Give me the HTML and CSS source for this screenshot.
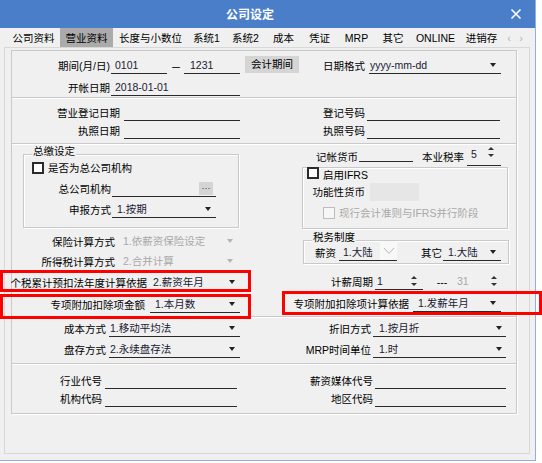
FILE: index.html
```html
<!DOCTYPE html>
<html lang="zh-CN">
<head>
<meta charset="utf-8">
<title>公司设定</title>
<link rel="stylesheet" href="styles.css">
</head>
<body>
<div class="win">
  <div class="titlebar">
    <span class="title">公司设定</span>
    <span class="close"><svg width="12" height="12" viewBox="0 0 12 12"><path d="M1.5 1.5 L10.5 10.5 M10.5 1.5 L1.5 10.5" stroke="#fff" stroke-width="1.6" fill="none"/></svg></span>
  </div>
  <div class="tabs">
    <span class="tab">公司资料</span>
    <span class="tab active">营业资料</span>
    <span class="tab">长度与小数位</span>
    <span class="tab">系统1</span>
    <span class="tab">系统2</span>
    <span class="tab">成本</span>
    <span class="tab">凭证</span>
    <span class="tab">MRP</span>
    <span class="tab">其它</span>
    <span class="tab">ONLINE</span>
    <span class="tab">进销存</span>
    <span class="tabnav">&lsaquo;</span>
    <span class="tabnav">&rsaquo;</span>
  </div>
  <div class="page">
    <div class="form">
      <div class="sec s1">
        <div class="row">
          <span class="lab w-s1">期间(月/日)</span>
          <span class="fld f-p1"><span class="val">0101</span></span>
          <span class="dash">---</span>
          <span class="fld f-p2"><span class="val">1231</span></span>
          <span class="btn">会计期间</span>
          <span class="lab w-df">日期格式</span>
          <span class="fld f-df"><span class="val">yyyy-mm-dd</span><i class="arr"></i></span>
        </div>
        <div class="row r2">
          <span class="lab w-s1">开帐日期</span>
          <span class="fld f-kz"><span class="val">2018-01-01</span></span>
        </div>
      </div>
      <div class="sec s2">
        <div class="row">
          <span class="lab w-s2">营业登记日期</span>
          <span class="fld f-s2a"></span>
          <span class="lab w-s2b">登记号码</span>
          <span class="fld f-s2b"></span>
        </div>
        <div class="row r2">
          <span class="lab w-s2">执照日期</span>
          <span class="fld f-s2a"></span>
          <span class="lab w-s2b">执照号码</span>
          <span class="fld f-s2b"></span>
        </div>
      </div>
      <div class="sec s3">
        <div class="col col-l">
          <div class="group g-zj">
            <span class="legend">总缴设定</span>
            <div class="chkrow c-zj"><span class="chk"></span><span class="chklab">是否为总公司机构</span></div>
            <div class="row r-zgs">
              <span class="lab w-zgs">总公司机构</span>
              <span class="fld f-zgs"><span class="val"></span><span class="dots">···</span></span>
            </div>
            <div class="row r-sb">
              <span class="lab w-zgs">申报方式</span>
              <span class="fld f-zgs f-sb"><span class="val">1.按期</span><i class="arr"></i></span>
            </div>
          </div>
          <div class="row r-bx">
            <span class="lab w-bx">保险计算方式</span>
            <span class="fld f-dis"><span class="val">1.依薪资保险设定</span><i class="arr grey"></i></span>
          </div>
          <div class="row r-sd">
            <span class="lab w-bx">所得税计算方式</span>
            <span class="fld f-dis"><span class="val">2.合并计算</span><i class="arr grey"></i></span>
          </div>
          <div class="row r-gs">
            <span class="lab w-gs">个税累计预扣法年度计算依据</span>
            <span class="fld f-gs"><span class="val">2.薪资年月</span><i class="arr"></i></span>
          </div>
          <div class="row r-zx">
            <span class="lab w-zx">专项附加扣除项金额</span>
            <span class="fld f-zx"><span class="val">1.本月数</span><i class="arr"></i></span>
          </div>
        </div>
        <div class="col col-r">
          <div class="row r-jz">
            <span class="lab w-jz">记帐货币</span>
            <span class="fld f-jz"></span>
            <span class="lab w-sl">本业税率</span>
            <span class="fld f-sl"><span class="val">5</span><span class="spin"><i class="up"></i><i class="dn"></i></span></span>
          </div>
          <div class="group g-ifrs">
            <div class="chkrow c-ifrs"><span class="chk"></span><span class="chklab">启用IFRS</span></div>
            <div class="row r-gn">
              <span class="lab w-gn">功能性货币</span>
              <span class="greybox"></span>
            </div>
            <div class="chkrow c-xh"><span class="chk dis"></span><span class="chklab disabled">现行会计准则与IFRS并行阶段</span></div>
          </div>
          <div class="group g-sw">
            <span class="legend">税务制度</span>
            <div class="row r-sw">
              <span class="lab w-xz">薪资</span>
              <span class="fld f-xz"><span class="val">1.大陆</span><span class="chev"><svg width="12" height="8" viewBox="0 0 12 8"><path d="M1 1 L6 6.5 L11 1" stroke="#b8b8b8" stroke-width="1" fill="none"/></svg></span></span>
              <span class="lab w-qt">其它</span>
              <span class="fld f-qt"><span class="val">1.大陆</span><i class="arr"></i></span>
            </div>
          </div>
          <div class="row r-jx">
            <span class="lab w-jx">计薪周期</span>
            <span class="fld f-jx1"><span class="val">1</span><span class="spin"><i class="up"></i><i class="dn"></i></span></span>
            <span class="dash d-jx">---</span>
            <span class="fld f-jx2"><span class="val disabled">31</span><span class="spin"><i class="up"></i><i class="dn"></i></span></span>
          </div>
          <div class="row r-zxjs">
            <span class="lab w-zxjs">专项附加扣除项计算依据</span>
            <span class="fld f-zxjs"><span class="val">1.发薪年月</span><i class="arr"></i></span>
          </div>
        </div>
      </div>
      <div class="sec s4">
        <div class="row">
          <span class="lab w-s4">成本方式</span>
          <span class="fld f-s4a"><span class="val">1.移动平均法</span><i class="arr"></i></span>
          <span class="lab w-s4b">折旧方式</span>
          <span class="fld f-s4b"><span class="val">1.按月折</span><i class="arr"></i></span>
        </div>
        <div class="row r2">
          <span class="lab w-s4">盘存方式</span>
          <span class="fld f-s4a"><span class="val">2.永续盘存法</span><i class="arr"></i></span>
          <span class="lab w-s4b">MRP时间单位</span>
          <span class="fld f-s4b"><span class="val">1.时</span><i class="arr"></i></span>
        </div>
      </div>
      <div class="sec s5">
        <div class="row">
          <span class="lab w-s5">行业代号</span>
          <span class="fld f-s5a"></span>
          <span class="lab w-s5b">薪资媒体代号</span>
          <span class="fld f-s5b"></span>
        </div>
        <div class="row r2">
          <span class="lab w-s5">机构代码</span>
          <span class="fld f-s5a"></span>
          <span class="lab w-s5b">地区代码</span>
          <span class="fld f-s5b"></span>
        </div>
      </div>
    </div>
  </div>
  <div class="mark m1"></div>
  <div class="mark m2"></div>
  <div class="mark m3"></div>
</div>
</body>
</html>
```
FILE: styles.css
```css
* { box-sizing: border-box; }
body {
  margin: 0;
  background: #fff;
  font-family: "Liberation Sans", "Noto Sans CJK SC", sans-serif;
  font-size: 10.5px;
  color: #000;
}
.win {
  position: relative;
  width: 536px;
  height: 461px;
  background: #f0f0f0;
  border-right: 1px solid #8db0e0;
  border-bottom: 1px solid #8db0e0;
}
.titlebar {
  height: 28px;
  background: #4a7ec9;
  display: flex;
  align-items: center;
}
.title {
  flex: 1;
  text-align: center;
  color: #fff;
  font-weight: bold;
  font-size: 12px;
  font-family: "Noto Sans CJK SC", sans-serif;
  line-height: 16px;
}
.close {
  width: 32px;
  margin-right: 3px;
  display: flex;
  justify-content: center;
  align-items: center;
}
.tabs {
  height: 19px;
  display: flex;
  padding-left: 7px;
}
.tab {
  display: flex;
  align-items: center;
  justify-content: center;
  white-space: nowrap;
  line-height: 14px;
}
.tab:nth-child(1) { width: 53px; }
.tab:nth-child(2) { width: 53px; }
.tab:nth-child(3) { width: 75px; }
.tab:nth-child(4) { width: 37px; }
.tab:nth-child(5) { width: 41px; }
.tab:nth-child(6) { width: 35px; }
.tab:nth-child(7) { width: 37px; }
.tab:nth-child(8) { width: 37px; }
.tab:nth-child(9) { width: 36px; }
.tab:nth-child(10) { width: 49px; }
.tab:nth-child(11) { width: 43px; }
.tab.active { background: #ababab; }
.tabnav {
  width: 12px;
  display: flex;
  align-items: center;
  justify-content: center;
  color: #b4b4b4;
  font-size: 11px;
}
.page {
  margin-left: 4px;
  width: 526px;
  height: 407px;
  border: 1px solid #d8d8d8;
  padding-top: 2px;
  padding-left: 6px;
}
.form {
  width: 506px;
  height: 364px;
  border: 1px solid #c9c9c9;
  box-shadow: 1px 1px 0 #fff;
}
.sec + .sec {
  border-top: 1px solid #c9c9c9;
  box-shadow: inset 0 1px 0 #fff;
}
.s1 { height: 46px; padding-top: 6px; }
.s2 { height: 46px; padding-top: 6px; }
.s3 { height: 173px; display: flex; }
.s4 { height: 47px; padding-top: 3px; }
.s5 { height: 50px; padding-top: 8px; }

.row {
  display: flex;
  align-items: flex-end;
  height: 17px;
}
.s1 .r2 { margin-top: 5px; }
.s2 .r2 { margin-top: 1px; }
.s4 .r2 { margin-top: 4px; }
.s5 .r2 { margin-top: 1px; }

.lab {
  flex: none;
  display: flex;
  justify-content: flex-end;
  white-space: nowrap;
  height: 16px;
  line-height: 16px;
}
.fld {
  flex: none;
  display: flex;
  align-items: center;
  height: 17px;
  border-bottom: 1px solid #2a2a2a;
  line-height: 16px;
  white-space: nowrap;
}
.val { flex: 1; color: #1a1a33; }
.val.disabled, .f-dis .val { color: #a8a8a8; }
.arr {
  flex: none;
  width: 0;
  height: 0;
  border-left: 3px solid transparent;
  border-right: 3px solid transparent;
  border-top: 4px solid #222;
}
.arr.grey { border-top-color: #b4b4b4; }
.spin {
  flex: none;
  display: flex;
  flex-direction: column;
  gap: 4px;
}
.spin .up, .spin .dn {
  display: block;
  width: 0;
  height: 0;
  border-left: 3px solid transparent;
  border-right: 3px solid transparent;
}
.spin .up { border-bottom: 3px solid #333; }
.spin .dn { border-top: 3px solid #333; }
.dash {
  flex: none;
  text-align: center;
  line-height: 16px;
  height: 16px;
  letter-spacing: -1px;
}
.btn {
  flex: none;
  align-self: flex-start;
  margin-top: -1px;
  margin-left: 5px;
  width: 54px;
  height: 17px;
  line-height: 17px;
  background: #d5d5d5;
  text-align: center;
}

/* S1 */
.w-s1 { width: 98px; }
.f-p1 { margin-left: 1px; width: 56px; padding-left: 4px; }
.s1 .dash { width: 17px; }
.f-p2 { width: 56px; padding-left: 6px; }
.w-df { width: 66px; }
.f-df { margin-left: 4px; width: 132px; padding-left: 1px; padding-right: 5px; }
.f-kz { margin-left: 1px; width: 129px; padding-left: 4px; }

/* S2 */
.w-s2 { width: 108px; }
.f-s2a { margin-left: 4px; width: 116px; }
.w-s2b { width: 125px; }
.f-s2b { margin-left: 2px; width: 133px; }

/* S3 */
.col-l { width: 258px; flex: none; }
.col-r { width: 245px; flex: none; }
.group {
  border: 1px solid #c9c9c9;
  box-shadow: inset 1px 1px 0 #fff, 1px 1px 0 #fff;
}
.legend {
  display: block;
  width: max-content;
  margin: -10px 0 0 8px;
  padding: 0 1px;
  line-height: 12px;
  background: #f0f0f0;
}
.chkrow {
  display: flex;
  align-items: center;
  height: 12px;
}
.chk {
  flex: none;
  width: 12px;
  height: 12px;
  border: 2px solid #2b2b2b;
  background: #fff;
}
.chk.dis { border: 1px solid #bdbdbd; background: #f6f6f6; }
.chklab { margin-left: 4px; line-height: 12px; white-space: nowrap; }
.chklab.disabled { color: #a8a8a8; }

.g-zj { margin: 10px 0 0 11px; width: 216px; height: 74px; }
.c-zj { margin-top: 5px; padding-left: 8px; }
.r-zgs { margin-top: 6px; }
.r-sb { margin-top: 4px; }
.w-zgs { width: 88px; padding-right: 1px; }
.f-zgs { width: 104px; padding-left: 5px; padding-right: 5px; }
.r-zgs .f-zgs { padding-right: 3px; }
.dots {
  flex: none;
  align-self: flex-start;
  margin-top: 2px;
  width: 14px;
  height: 13px;
  line-height: 12px;
  background: #d4d4d4;
  text-align: center;
  font-size: 9px;
  color: #333;
}
.r-bx { margin-top: 5px; }
.r-sd { margin-top: 3px; }
.r-gs { margin-top: 4px; }
.r-zx { margin-top: 5px; }
.w-bx { width: 103px; }
.f-dis { margin-left: 5px; width: 120px; padding-left: 3px; padding-right: 7px; border-bottom-color: transparent; }
.w-gs { width: 135px; }
.f-gs { margin-left: 3px; width: 90px; padding-left: 3px; padding-right: 5px; }
.w-zx { width: 133px; }
.f-zx { margin-left: 5px; width: 90px; padding-left: 5px; padding-right: 5px; }

.r-jz { margin-top: 3px; height: 19px; align-items: flex-start; }
.w-jz { width: 88px; height: 19px; line-height: 20px; }
.f-jz { margin-left: 1px; width: 54px; height: 15px; }
.w-sl { width: 54px; padding-right: 3px; height: 19px; line-height: 20px; }
.f-sl { width: 34px; height: 19px; align-items: flex-start; padding-left: 4px; padding-right: 7px; }
.f-sl .val { line-height: 12px; margin-top: 1px; }
.f-sl .spin { margin-top: 0; }

.g-ifrs { margin: 1px 0 0 32px; width: 206px; height: 62px; }
.c-ifrs { margin-top: -1px; padding-left: 4px; height: 14px; align-items: flex-start; }
.c-ifrs .chklab { margin-top: 2px; }
.r-gn { margin-top: 2px; height: 18px; align-items: center; }
.w-gn { width: 62px; height: 18px; line-height: 18px; }
.greybox { margin-left: 5px; width: 49px; height: 18px; background: #e6e6e6; }
.c-xh { margin-top: 6px; padding-left: 20px; }

.g-sw { margin: 11px 0 0 33px; width: 206px; height: 24px; }
.r-sw { margin-top: 1px; }
.w-xz { width: 32px; }
.f-xz { margin-left: 3px; width: 58px; padding-left: 4px; }
.chev {
  flex: none;
  align-self: flex-start;
  margin-top: -3px;
  width: 17px;
  height: 19px;
  background: #f8f8f8;
  display: flex;
  align-items: center;
  justify-content: center;
}
.w-qt { width: 46px; padding-right: 1px; }
.f-qt { width: 58px; padding-left: 5px; padding-right: 5px; }

.r-jx { margin-top: 9px; }
.w-jx { width: 103px; }
.f-jx1 { margin-left: 2px; width: 48px; padding-left: 2px; padding-right: 6px; }
.d-jx { margin-left: 10px; width: 18px; letter-spacing: 0; }
.f-jx2 { margin-left: 4px; width: 46px; padding-left: 2px; padding-right: 4px; border-bottom-color: transparent; }
.r-zxjs { margin-top: 5px; }
.w-zxjs { width: 139px; }
.f-zxjs { margin-left: 4px; width: 88px; padding-left: 5px; padding-right: 5px; }

/* S4 */
.w-s4 { width: 94px; }
.f-s4a { margin-left: 3px; width: 131px; padding-left: 1px; padding-right: 5px; }
.w-s4b { width: 131px; }
.f-s4b { margin-left: 2px; width: 133px; padding-left: 6px; padding-right: 4px; }

/* S5 */
.w-s5 { width: 90px; }
.f-s5a { margin-left: 3px; width: 132px; }
.w-s5b { width: 136px; }
.f-s5b { margin-left: 2px; width: 131px; }

/* annotation boxes */
.mark {
  position: absolute;
  border: 3px solid #f00;
}
.m1 { left: 0; top: 270px; width: 251px; height: 22px; }
.m2 { left: 0; top: 294px; width: 251px; height: 25px; }
.m3 { left: 282px; top: 291px; width: 260px; height: 24px; }
```
